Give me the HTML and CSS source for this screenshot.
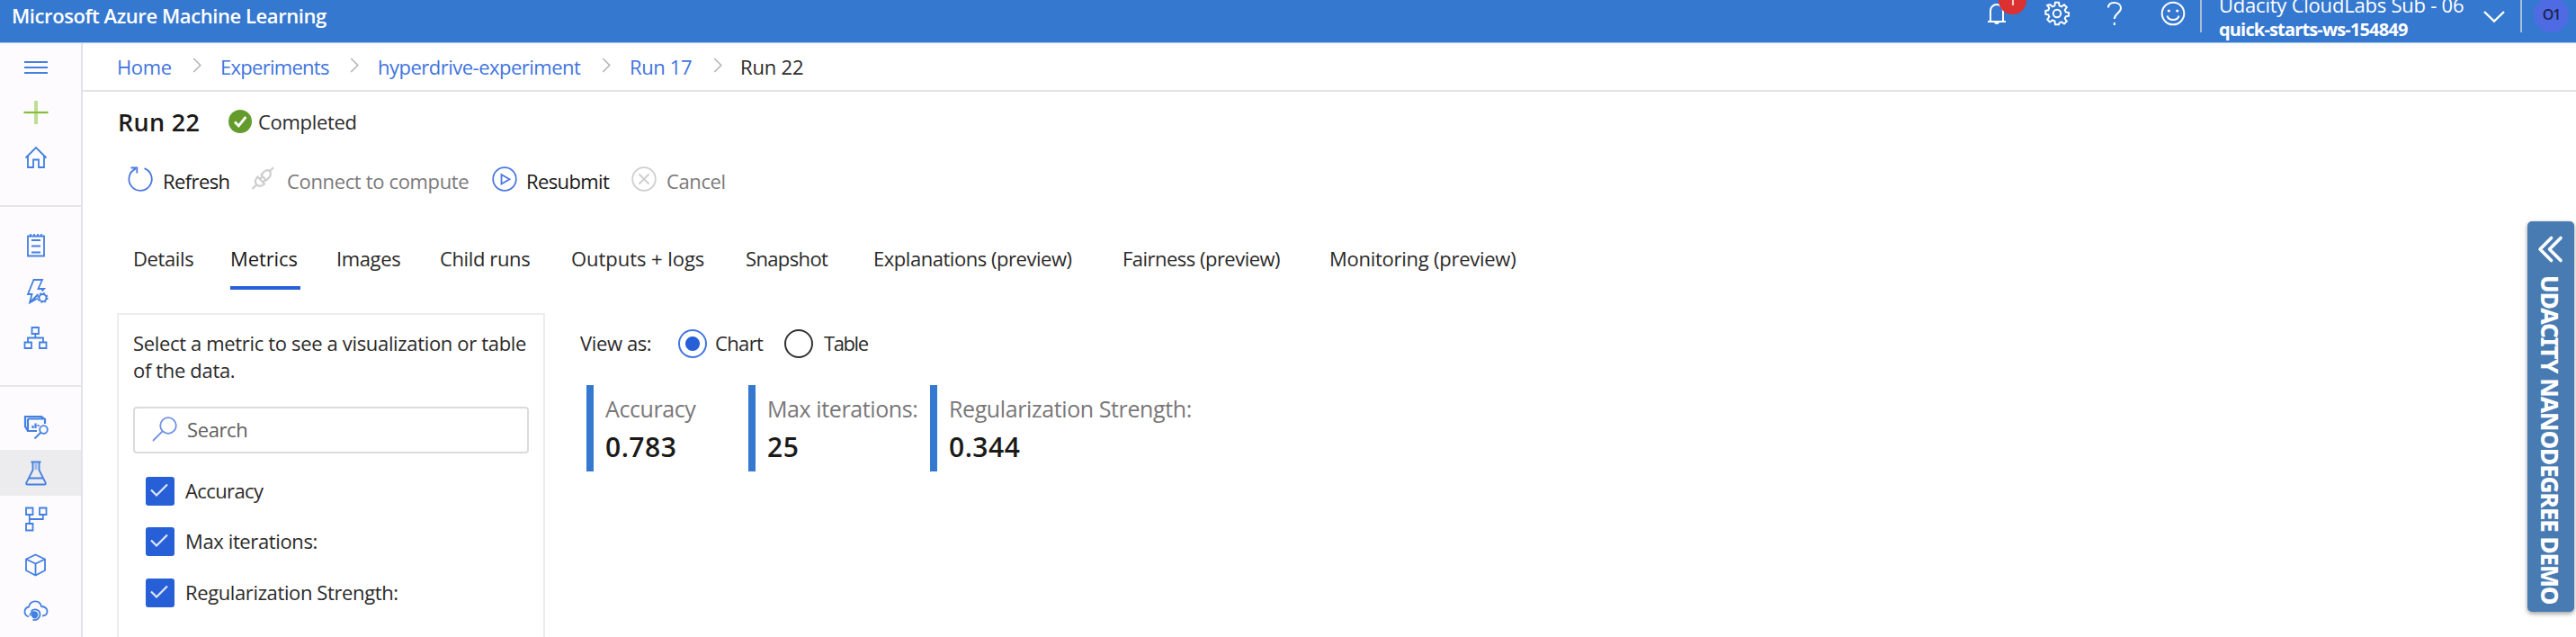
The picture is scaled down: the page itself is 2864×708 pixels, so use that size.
FILE: index.html
```
<!DOCTYPE html>
<html lang="en">
<head>
<meta charset="utf-8">
<title>Run 22 - Microsoft Azure Machine Learning</title>
<link rel="stylesheet" href="styles.css">
</head>
<body>
<header class="topbar">
  <div class="brand">Microsoft Azure Machine Learning</div>
  <div class="tools">
    <div class="bell">
      <svg width="24" height="28" viewBox="0 0 24 28"><path d="M5 22V11a7 7 0 0 1 14 0v11M2 23h20" /><path d="M9 24a3.2 3.2 0 0 0 6 0z" fill="#fff" stroke="none"/></svg>
      <span class="badge">1</span>
    </div>
    <svg class="gear" width="28" height="28" viewBox="0 0 28 28"><path d="M12 2h4l.6 3.6 2.4 1 3-2.1 2.8 2.8-2.1 3 1 2.4 3.3.6v3.6l-3.3.8-1 2.3 2.1 3-2.8 2.8-3-2.1-2.4 1L16 26.500h-4l-.6-3.800-2.400-1-3 2.100-2.800-2.800 2.100-3-1-2.300L1.300 15v-3.700l3-.700 1-2.400-2.100-3L6 4.400l3 2.200 2.400-1z" transform="translate(0 -.3)"/><circle cx="14" cy="14" r="4.200"/></svg>
    <svg width="20" height="28" viewBox="0 0 20 28"><path d="M2 7.500C2 4 4.500 2 8.500 2S16 4.200 16 8c0 5.500-7.200 6-7.200 12M8.800 24v3"/></svg>
    <svg width="28" height="28" viewBox="0 0 28 28"><circle cx="14" cy="14" r="12.300"/><path d="M7.500 16.500c1.500 6 11.500 6 13 0"/><circle cx="9.300" cy="11" r="1.600" fill="#fff" stroke="none"/><circle cx="18.700" cy="11" r="1.600" fill="#fff" stroke="none"/></svg>
    <i class="rule"></i>
    <div class="workspace"><div class="sub">Udacity CloudLabs Sub - 06</div><div class="ws">quick-starts-ws-154849</div></div>
    <svg class="drop" width="24" height="16" viewBox="0 0 24 16"><path d="M1 2l11 10.500L23 2"/></svg>
    <i class="rule"></i>
    <div class="avatar">O1</div>
  </div>
</header>
<div class="shell">
  <nav class="side">
    <div class="group first">
      <a><svg viewBox="0 0 28 28"><path class="thick" d="M1 8h26M1 14h26M1 20h26"/></svg></a>
      <a><svg viewBox="0 0 28 28"><path d="M14 1v26" stroke="#bddf95" stroke-width="4"/><path d="M.5 14h27" stroke="#84bf38" stroke-width="2.200"/></svg></a>
      <a><svg viewBox="0 0 28 28"><path d="M2.500 14.500L14 3l11.500 11.500M5 12.500V25h6v-8.500h6V25h6V12.500"/></svg></a>
    </div>
    <div class="group second">
      <a><svg viewBox="0 0 28 28"><path d="M5 3.500h18v22H5zM8 1v3M12 1v3M16 1v3M20 1v3M9 8h10M9 14.500h10M9 21.500h10"/></svg></a>
      <a><svg viewBox="0 0 28 28"><path d="M16 21.500L7 26.500 9.500 17H5l6.500-16H21l-4.500 10H23l-2.500 2.500M7.500 26l9-9"/><circle cx="21.500" cy="21" r="4"/><circle cx="21.500" cy="21" r="5.300" stroke-dasharray="2 2.160" stroke-width="1.500"/></svg></a>
      <a><svg viewBox="0 0 28 28"><path d="M9.500 2h7.500v7H9.500zM1.500 18.500H9V25H1.500zM18 18.500h7.500V25H18zM13.300 9v4.500M5 18.500v-5h17v5"/></svg></a>
    </div>
    <div class="group third">
      <a><svg viewBox="0 0 28 28"><path class="thick" d="M2 14V2h18l4 3v5M5 4.500V18h10M2 13l3 5M5 4.500h17M10.500 15v-3M13.500 15V9.500M16.500 13v-2"/><circle cx="22.500" cy="16.500" r="4.300"/><path d="M19.500 19.500L12.500 26.500"/></svg></a>
      <a class="active"><svg viewBox="0 0 28 28"><path d="M8.500 1.500h11M10.500 2v8.500L3.300 24.500c-.5 1.300 0 2 1.200 2h19c1.200 0 1.700-.700 1.200-2L17.500 10.500V2M6 19.500h16"/><path d="M14 3v7" stroke-width="3" opacity=".45"/></svg></a>
      <a><svg viewBox="0 0 28 28"><path d="M3 1.500h7.500V9H3zM18 1.500h7.500V9H18zM3 19h7.500v7.500H3zM6.800 9v10M6.800 14h15V9"/></svg></a>
      <a><svg viewBox="0 0 28 28"><path d="M13.500 2.500l10.500 5v12.500l-10.500 5.500L3 20V7.500zM3 7.500l10.500 5 10.500-5M13.500 12.500v13"/></svg></a>
      <a><svg viewBox="0 0 28 28"><path d="M6 20.500C-.5 18.500.5 10.500 6 9.500 8 1.500 18 1.500 20 9c8 .5 9 9.500 1 10.500"/><path d="M8.500 14.500c3-4 10-2 10 3.500 0 4-3.500 6.500-8 6M7.500 19.500c0-5 7-6 8-1.500.5 3-3 4.500-5 3"/><circle cx="12" cy="18.500" r="2.200" fill="#4380e0"/></svg></a>
    </div>
  </nav>
  <main>
    <div class="crumbs">
      <a class="c-home">Home</a><svg viewBox="0 0 10 18"><path d="M1 1l8 8-8 8"/></svg>
      <a class="c-exp">Experiments</a><svg viewBox="0 0 10 18"><path d="M1 1l8 8-8 8"/></svg>
      <a class="c-hyper">hyperdrive-experiment</a><svg viewBox="0 0 10 18"><path d="M1 1l8 8-8 8"/></svg>
      <a>Run 17</a><svg viewBox="0 0 10 18"><path d="M1 1l8 8-8 8"/></svg>
      <span class="c-run">Run 22</span>
    </div>
    <div class="title">
      <h1>Run 22</h1>
      <svg width="26" height="26" viewBox="0 0 26 26"><circle cx="13" cy="13" r="13" fill="#639c2b"/><path d="M7 13.500l4.300 4.300L19.300 8" fill="none" stroke="#fff" stroke-width="2.800"/></svg>
      <span>Completed</span>
    </div>
    <div class="commands">
      <svg viewBox="0 0 28 28"><path d="M18.500 2.200a12.700 12.700 0 1 1-9.800.4M3.500 1.500h6.800v6"/></svg>
      <span class="k-refresh">Refresh</span>
      <svg class="off" viewBox="0 0 28 28"><path stroke-width="2.200" d="M.5 25l5-5M19.500 6l4.500-5M5 20c-2-3-1-6 1.500-8.500l7.500 8c-3 2.500-6.500 3.500-9 .5zM10.500 9.500l2.500-3c2-2.500 5-3 6.500-1.500 2 2 1.500 5-.5 7.500L16 15.500zM9 14l3-3M12.500 17.500l3-3"/></svg>
      <span class="off k-connect">Connect to compute</span>
      <svg viewBox="0 0 28 28"><circle cx="14" cy="14" r="12.800"/><path d="M10.500 9v10.500l9-5.200z"/></svg>
      <span class="k-resubmit">Resubmit</span>
      <svg class="off" viewBox="0 0 28 28"><circle cx="14" cy="14" r="12.800"/><path d="M8.500 8.500l11 11M19.500 8.500l-11 11"/></svg>
      <span class="off">Cancel</span>
    </div>
    <div class="tabs">
      <a>Details</a><a class="on"><span>Metrics</span></a><a>Images</a><a>Child runs</a><a class="t-out">Outputs + logs</a><a class="t-snap">Snapshot</a><a class="t-expl">Explanations (preview)</a><a class="t-fair">Fairness (preview)</a><a class="t-mon">Monitoring (preview)</a>
    </div>
    <div class="body">
      <section class="panel">
        <p>Select a metric to see a visualization or table<br>of the data.</p>
        <div class="search"><svg width="28" height="28" viewBox="0 0 28 28"><circle cx="18" cy="10" r="8.800"/><path d="M11.800 16.200L1 27"/></svg><span>Search</span></div>
        <label class="check"><i><svg width="20" height="16" viewBox="0 0 20 16"><path d="M1 7.500l6 6L19 1.500"/></svg></i><span class="m-acc">Accuracy</span></label>
        <label class="check"><i><svg width="20" height="16" viewBox="0 0 20 16"><path d="M1 7.500l6 6L19 1.500"/></svg></i><span>Max iterations:</span></label>
        <label class="check"><i><svg width="20" height="16" viewBox="0 0 20 16"><path d="M1 7.500l6 6L19 1.500"/></svg></i><span>Regularization Strength:</span></label>
      </section>
      <section class="result">
        <div class="view">
          <span>View as:</span><i class="radio sel"></i><span class="v-chart">Chart</span><i class="radio"></i><span class="v-table">Table</span>
        </div>
        <div class="cards">
          <div class="card"><div class="name n-acc">Accuracy</div><div class="value">0.783</div></div>
          <div class="card"><div class="name">Max iterations:</div><div class="value">25</div></div>
          <div class="card"><div class="name">Regularization Strength:</div><div class="value">0.344</div></div>
        </div>
      </section>
    </div>
  </main>
</div>
<aside class="drawer">
  <svg width="28" height="28" viewBox="0 0 28 28"><path d="M15.500 1.500L3 14l12.500 12.500M26 1.500L13.500 14 26 26.500"/></svg>
  <span>UDACITY NANODEGREE DEMO</span>
</aside>
</body>
</html>
```

FILE: styles.css
```
* { box-sizing: border-box; }
body {
  margin: 0;
  width: 2864px;
  height: 708px;
  overflow: hidden;
  background: #fff;
  color: #2b2a29;
  font: 22px/30px "Open Sans", "Noto Sans", sans-serif;
  letter-spacing: -0.38px;
  white-space: nowrap;
}
svg { display: block; fill: none; overflow: visible; }

/* top bar */
.topbar {
  display: flex;
  justify-content: space-between;
  height: 48px;
  overflow: hidden;
  background: #3578cf;
  border-bottom: 1px solid #a5c6ee;
  color: #fff;
}
.brand { padding: 2px 0 0 13px; font-weight: 600; letter-spacing: -0.42px; }
.tools {
  display: grid;
  grid-template-columns: 65px 69px 60px 44px 21px 294px 41px 15px 47px;
  align-items: start;
  height: 47px;
}
.tools svg { margin-top: 1px; stroke: #fff; stroke-width: 2; }
.bell { position: relative; }
.badge {
  position: absolute;
  left: 14px;
  top: -15px;
  width: 31px;
  height: 31px;
  border-radius: 50%;
  background: #dc3131;
  font-size: 17px;
  line-height: 30px;
  text-align: center;
}
.rule { width: 2px; height: 36px; background: #a9bdd6; }
.workspace { margin-top: -8px; }
.sub { line-height: 27px; letter-spacing: -0.22px; }
.ws { margin-top: 1px; font-size: 20px; font-weight: 700; line-height: 26px; letter-spacing: -0.84px; }
.tools .drop { margin-top: 11px; stroke-width: 2.4; }
.avatar {
  width: 39px;
  height: 39px;
  margin-top: -3px;
  border-radius: 50%;
  background: #4f6be4;
  color: #1c2452;
  font-size: 16px;
  font-weight: 600;
  line-height: 39px;
  text-align: center;
  letter-spacing: -1px;
}

/* sidebar */
.shell { display: flex; height: 660px; }
.side {
  width: 92px;
  background: #fdfbfe;
  border-right: 2px solid #e3e2e5;
}
.group { border-bottom: 2px solid #e6e5e8; }
.group a {
  display: flex;
  align-items: center;
  padding-left: 26px;
  height: 51.5px;
}
.group svg { width: 28px; height: 28px; stroke: #4380e0; stroke-width: 1.8; }
.group .thick { stroke-width: 2.2; }
.first { height: 182px; padding-top: 2px; }
.first a { height: 50px; }
.second { height: 200px; padding-top: 17px; }
.third { padding-top: 19px; border: 0; }
.group.third a { height: 51px; }
.group .active { background: #ecebee; }

/* page header */
main { flex: 1; }
.crumbs {
  display: grid;
  grid-template-columns: 84px 31px 144px 31px 249px 31px 93px 30px auto;
  align-items: center;
  height: 54px;
  padding-left: 38px;
  border-bottom: 2px solid #e3e3e3;
}
.crumbs a { color: #3f74df; }
.crumbs svg { width: 10px; height: 17px; margin-bottom: 4px; stroke: #b5b1b4; stroke-width: 1.6; }
.c-exp { letter-spacing: -0.72px; }
.c-hyper { letter-spacing: -0.51px; }
.c-run { letter-spacing: -0.17px; }
.title {
  display: grid;
  grid-template-columns: 123px 33px auto;
  height: 70px;
  padding: 15px 0 0 39px;
}
h1 { margin: 0; font-size: 27px; line-height: 37px; font-weight: 600; letter-spacing: 0.3px; color: #1b1a19; }
.title svg { margin-top: 5px; }
.title span { margin-top: 3px; letter-spacing: -0.3px; }
.commands {
  display: grid;
  grid-template-columns: 39px 99px 39px 228px 38px 117px 39px auto;
  height: 60px;
  padding: 14px 0 0 50px;
  color: #1b1a19;
}
.commands svg { width: 28px; height: 28px; margin-top: -1px; stroke: #4b78e0; stroke-width: 1.8; }
.commands svg.off { stroke: #cfcdcf; }
.commands .off { color: #7b797a; }
.k-refresh { letter-spacing: -0.6px; }
.k-resubmit { letter-spacing: -0.61px; }
.k-connect { letter-spacing: -0.35px; }
.tabs {
  display: grid;
  grid-template-columns: 108px 118px 115px 146px 194px 142px 277px 230px auto;
  height: 90px;
  padding: 40px 0 0 56px;
}
.on { display: flex; color: #1b1a19; font-weight: 500; }
.on span { width: 78px; border-bottom: 4px solid #2860da; letter-spacing: -0.1px; }
.t-out { letter-spacing: -0.05px; }
.t-snap { letter-spacing: -0.64px; }
.t-expl { letter-spacing: -0.46px; }
.t-fair { letter-spacing: -0.52px; }
.t-mon { letter-spacing: -0.26px; }

/* metric picker */
.body { display: flex; padding: 26px 0 0 38px; }
.panel {
  width: 476px;
  height: 380px;
  padding: 16px 16px 0;
  border: 2px solid #eeedee;
}
.panel p { margin: 0 0 26px; letter-spacing: -0.34px; }
.search {
  display: flex;
  align-items: center;
  gap: 11px;
  height: 52px;
  margin-bottom: 26px;
  padding-left: 19px;
  border: 2px solid #dcdadb;
  border-radius: 4px;
  color: #605e5c;
}
.search svg { margin-bottom: 3px; stroke: #6f90e4; stroke-width: 1.8; }
.search span { margin-bottom: 2px; }
.check {
  display: flex;
  align-items: center;
  gap: 12px;
  height: 32px;
  margin: 0 0 24px 14px;
}
.check + .check + .check { margin-top: 25px; }
.check span { margin-bottom: 2px; }
.check i {
  display: flex;
  align-items: center;
  justify-content: center;
  width: 32px;
  height: 32px;
  border-radius: 3px;
  background: #275fd7;
}
.check svg { margin: 0 2px 2px 0; stroke: #dfe8fb; stroke-width: 2.2; }
.m-acc { letter-spacing: -0.6px; }

/* results */
.result { padding: 18px 0 0 39px; }
.view {
  display: grid;
  grid-template-columns: 109px 41px 77px 44px auto;
  align-items: center;
  height: 32px;
}
.view span { margin-bottom: 2px; }
.radio {
  width: 32px;
  height: 32px;
  border: 2px solid #323130;
  border-radius: 50%;
}
.sel { border-color: #4076df; background: radial-gradient(circle, #275fd7 7.500px, #fff 8.500px); }
.v-chart { letter-spacing: -0.64px; }
.v-table { letter-spacing: -1.4px; }
.cards {
  display: grid;
  grid-template-columns: 180px 202px auto;
  margin: 30px 0 0 7px;
}
.card { height: 96px; padding: 9px 0 0 13px; border-left: 8px solid #3578cf; }
.name { font-size: 25px; line-height: 34px; color: #797778; letter-spacing: -0.4px; }
.n-acc { letter-spacing: -0.4px; }
.value { margin-top: 6px; font-size: 30px; line-height: 40px; font-weight: 600; color: #1b1a19; letter-spacing: 0.5px; }

/* floating drawer handle */
.drawer {
  position: absolute;
  left: 2810px;
  top: 246px;
  width: 52px;
  height: 434px;
  padding: 17px 12px 0 12px;
  border-radius: 5px;
  background: #497bb3;
  box-shadow: 0 2px 5px rgba(0, 0, 0, 0.4);
  color: #fff;
}
.drawer svg { margin-left: -1px; stroke: #fff; stroke-width: 3.6; stroke-linecap: round; stroke-linejoin: round; }
.drawer span {
  display: block;
  margin: 15px 0 0 -1px;
  writing-mode: vertical-rl;
  font-family: "Noto Sans", sans-serif;
  font-size: 26px;
  font-weight: 800;
  line-height: 28px;
  letter-spacing: -1px;
}
```
